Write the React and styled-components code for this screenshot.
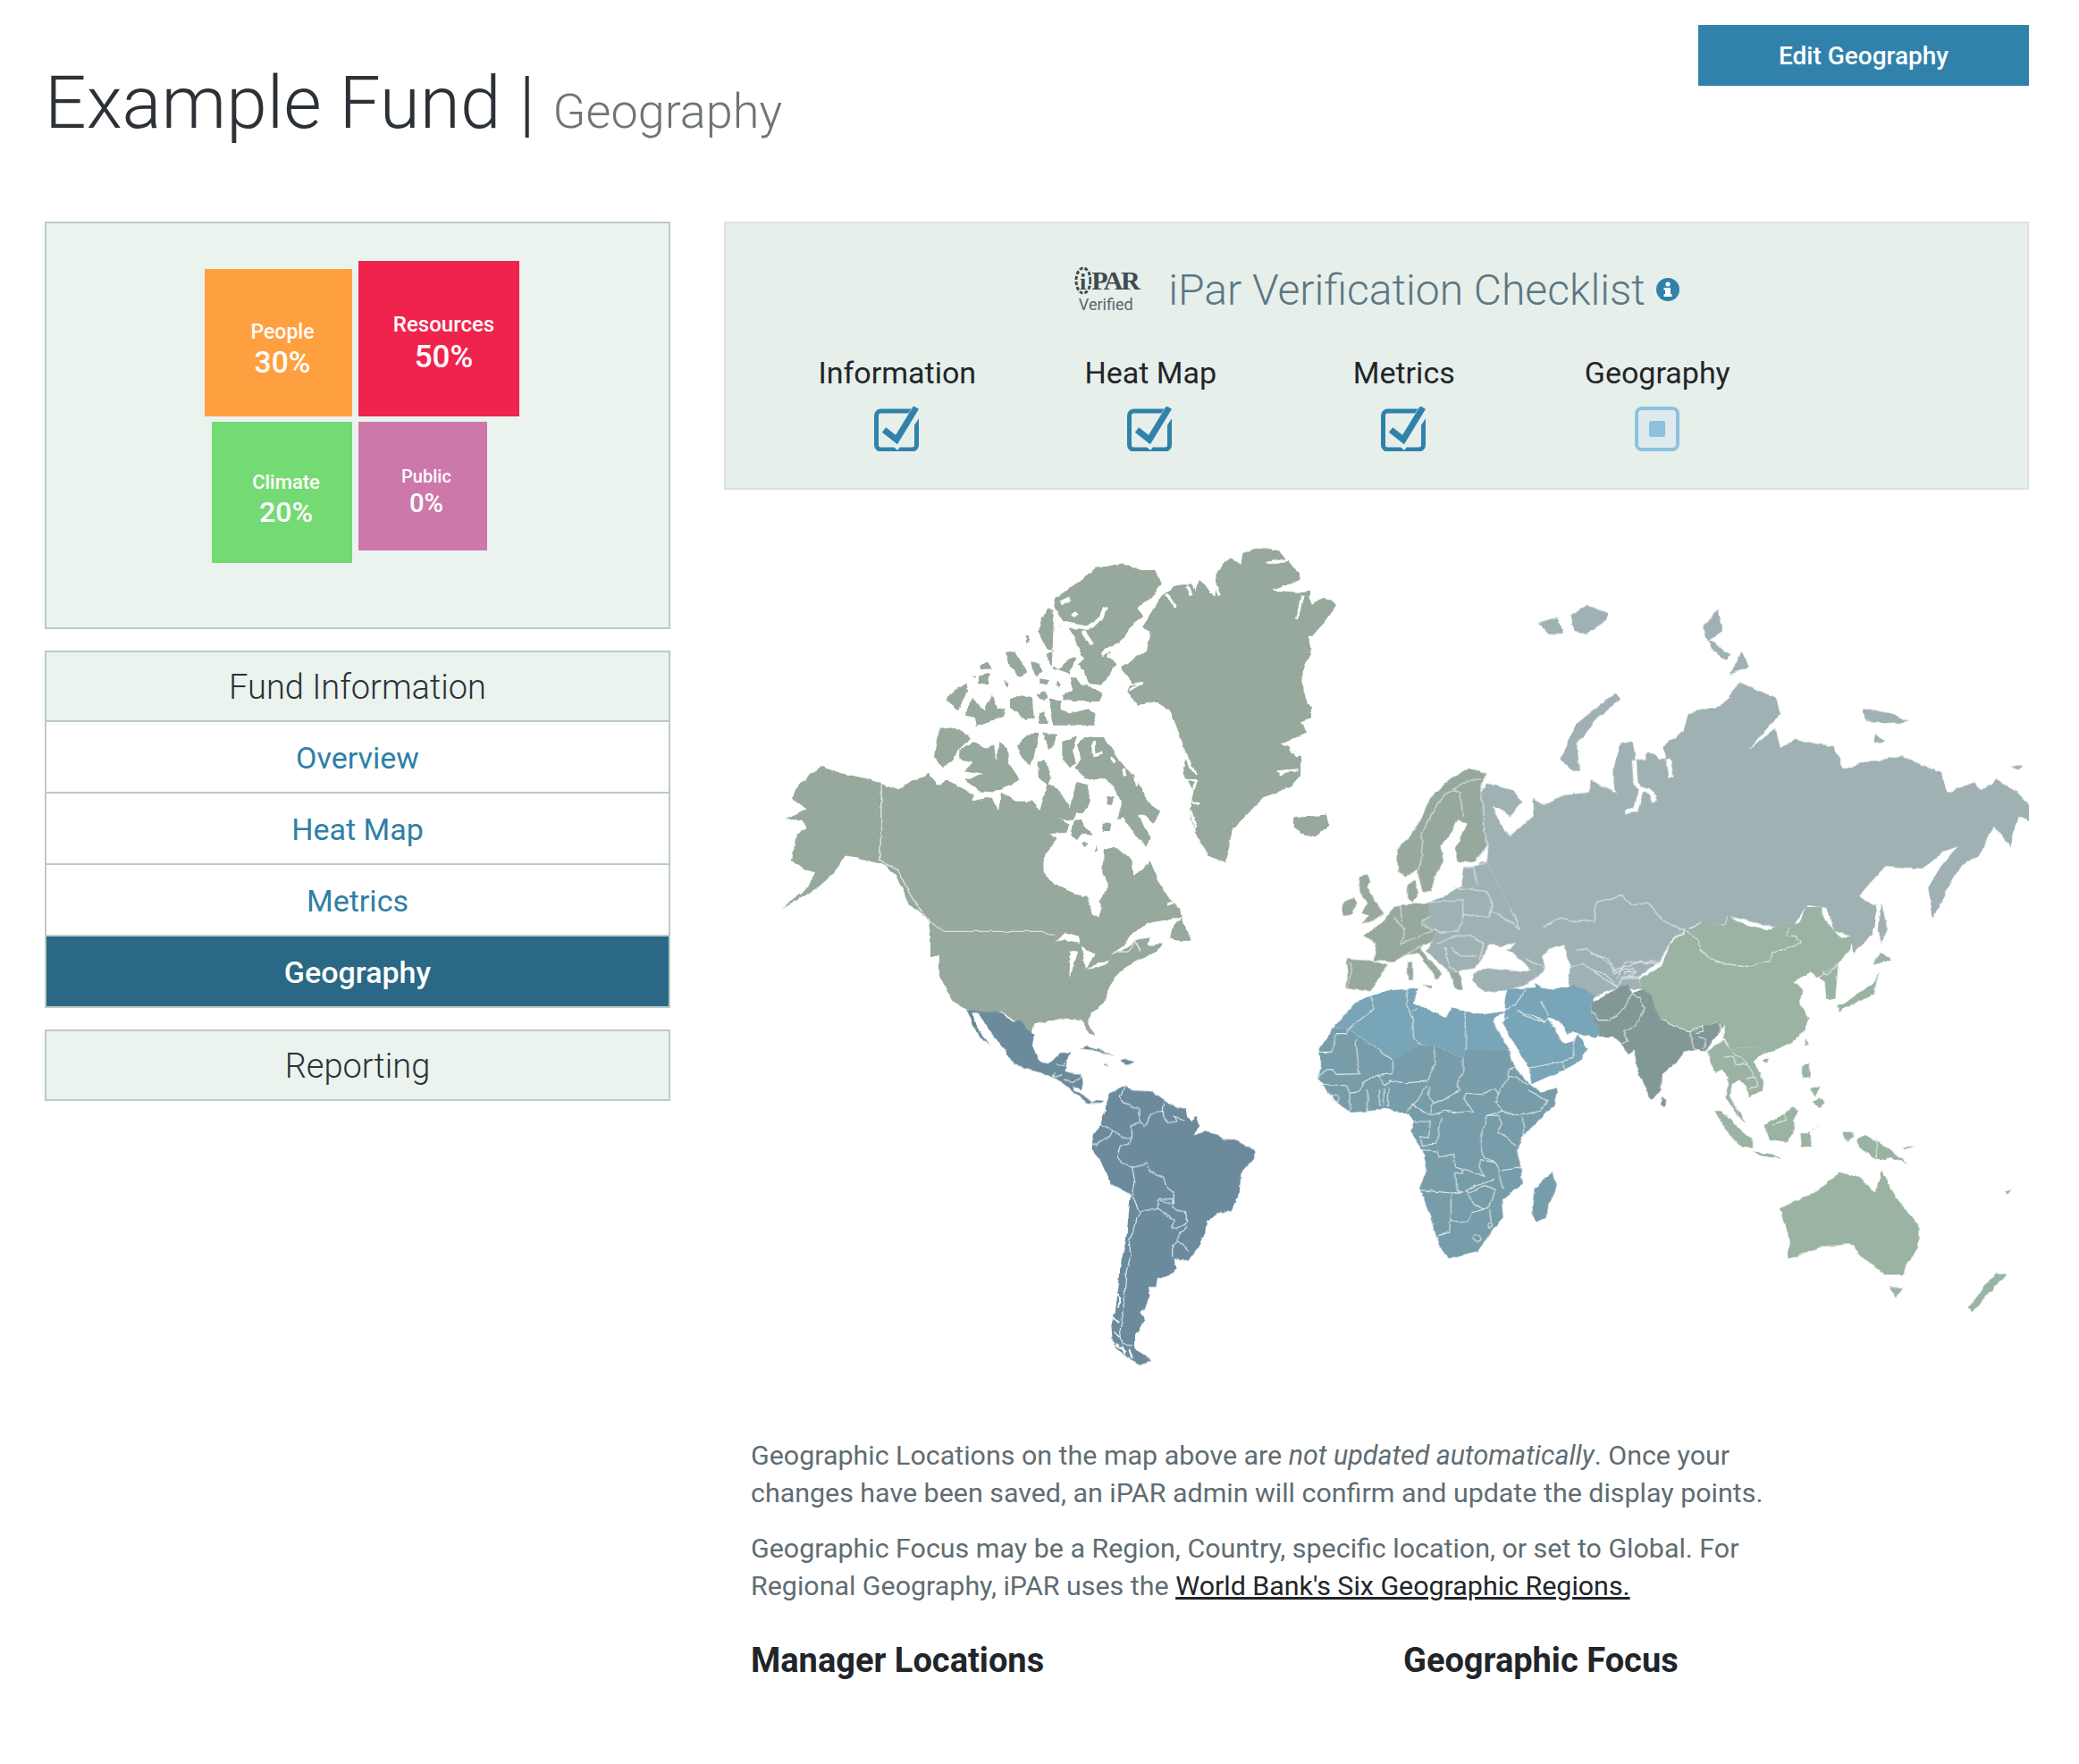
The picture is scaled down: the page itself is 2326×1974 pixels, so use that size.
import styled, { createGlobalStyle } from "styled-components";

const GlobalStyle = createGlobalStyle`
  html, body { margin: 0; padding: 0; background: #fff; }
  body { font-family: Roboto, "Liberation Sans", sans-serif; color: #212529; }
  * { box-sizing: border-box; }
`;

const Page = styled.div`
  width: 2326px;
  padding: 0 56px 0 50px;
`;

const Header = styled.header`
  display: flex;
  justify-content: space-between;
  align-items: flex-start;
  height: 248px;
`;

const Title = styled.h1`
  margin: 62px 0 0 0;
  font-size: 82px;
  line-height: 106px;
  font-weight: 300;
  color: #2b3136;
`;

const SubTitle = styled.small`
  font-size: 54px;
  font-weight: 300;
  color: #6f7477;
`;

const EditButton = styled.button`
  width: 370px;
  height: 68px;
  margin-top: 28px;
  border: 0;
  background: #3082ab;
  color: #fff;
  font: 500 28px Roboto, sans-serif;
`;

const Layout = styled.div`
  display: grid;
  grid-template-columns: 700px 1460px;
  gap: 60px;
  align-items: start;
`;

const Sidebar = styled.aside`
  display: flex;
  flex-direction: column;
  gap: 24px;
`;

const TreePanel = styled.div`
  height: 456px;
  padding: 42px 0 0 175px;
  background: #eaf3ee;
  border: 2px solid #bccbc6;
`;

const TreeGrid = styled.div`
  display: grid;
  grid-template-columns: 167px 180px;
  column-gap: 6.5px;
  row-gap: 6px;
`;

const Tile = styled.div`
  width: ${(p) => p.$w}px;
  height: ${(p) => p.$h}px;
  justify-self: ${(p) => p.$justify};
  align-self: ${(p) => p.$align};
  background: ${(p) => p.$color};
  color: #fff;
  display: flex;
  flex-direction: column;
  align-items: center;
  justify-content: center;
  padding: ${(p) => p.$top}px 0 0 ${(p) => p.$left}px;
  font-size: ${(p) => p.$size}px;
  line-height: 1.2;
  font-weight: 500;
  span {
    font-size: ${(p) => p.$size * 1.46}px;
    line-height: 1.25;
  }
`;

const NavBox = styled.nav`
  border: 2px solid #bccbc6;
  display: flex;
  flex-direction: column;
`;

const NavHead = styled.div`
  height: 76px;
  padding-top: 2px;
  background: #eaf3ee;
  font-size: 38px;
  font-weight: 300;
  color: #2b3136;
  display: flex;
  align-items: center;
  justify-content: center;
`;

const NavLink = styled.a`
  height: 80px;
  padding-top: 2px;
  border-top: 2px solid #bccbc6;
  background: ${(p) => (p.$active ? "#2a6885" : "#fff")};
  color: ${(p) => (p.$active ? "#fff" : "#2f7fa6")};
  font-size: 34px;
  font-weight: ${(p) => (p.$active ? 500 : 400)};
  display: flex;
  align-items: center;
  justify-content: center;
`;

const Main = styled.main`
  display: flex;
  flex-direction: column;
`;

const CheckPanel = styled.section`
  height: 300px;
  background: #e6efea;
  border: 2px solid #dde1df;
  padding: 34px 0 0 50px;
`;

const CheckTitleRow = styled.div`
  display: flex;
  align-items: center;
  justify-content: center;
  gap: 34px;
  height: 80px;
  margin-left: -50px;
`;

const Logo = styled.div`
  width: 72px;
  display: flex;
  flex-direction: column;
  align-items: center;
  color: #3f4a50;
`;

const LogoMark = styled.div`
  display: flex;
  align-items: center;
  font: 700 30px/34px "Liberation Serif", serif;
  letter-spacing: -2.5px;
`;

const LogoVerified = styled.div`
  font-size: 18px;
  line-height: 20px;
  color: #5a666c;
`;

const CheckTitle = styled.h2`
  margin: 0;
  font-size: 48px;
  font-weight: 300;
  color: #5d7683;
  display: flex;
  align-items: center;
  gap: 12px;
`;

const CheckRow = styled.div`
  display: grid;
  grid-template-columns: repeat(4, 283.5px);
  margin-top: 31px;
`;

const CheckItem = styled.div`
  display: flex;
  flex-direction: column;
  align-items: center;
  gap: 16px;
  font-size: 34px;
  line-height: 44px;
  color: #212529;
`;

const MapSvg = styled.svg`
  display: block;
  width: 1460px;
  height: 1030px;
  path { vector-effect: non-scaling-stroke; fill: none; }
`;

const Copy = styled.div`
  padding: 30px 0 0 30px;
  width: 1180px;
`;

const Para = styled.p`
  margin: 0 0 20px;
  font-size: 30.4px;
  line-height: 42px;
  color: #5f6c73;
  a { color: #212529; text-decoration: underline; }
`;

const Columns = styled.div`
  display: grid;
  grid-template-columns: 730px 1fr;
  margin-top: 20px;
  padding-left: 30px;
`;

const ColHeading = styled.h3`
  margin: 0;
  font-size: 38px;
  line-height: 44px;
  font-weight: 700;
  color: #212529;
`;

function CheckedBox() {
  return (
    <svg width="52" height="50" viewBox="0 0 52 50">
      <rect x="2.5" y="5" width="45" height="43" rx="5" fill="none" stroke="#3082ab" strokeWidth="5" />
      <path d="M11 26 L25 39 L49 3" fill="none" stroke="#e6efea" strokeWidth="13" />
      <path d="M11 26 L25 37 L47 1" fill="none" stroke="#3082ab" strokeWidth="7" />
    </svg>
  );
}

function PartialBox() {
  return (
    <svg width="52" height="50" viewBox="0 0 52 50">
      <rect x="3" y="2" width="46" height="46" rx="6" fill="#dfeaec" stroke="#8dc2de" strokeWidth="4" />
      <rect x="17" y="16" width="18" height="18" rx="2" fill="#8dc2de" />
    </svg>
  );
}

function InfoIcon() {
  return (
    <svg width="26" height="26" viewBox="0 0 26 26">
      <circle cx="13" cy="13" r="13" fill="#3082ab" />
      <rect x="10" y="11" width="6" height="9" fill="#fff" />
      <rect x="8.5" y="18" width="9" height="3" fill="#fff" />
      <rect x="8.5" y="11" width="6" height="2.5" fill="#fff" />
      <circle cx="13" cy="7" r="2.6" fill="#fff" />
    </svg>
  );
}

function LogoRing() {
  return (
    <svg width="20" height="34" viewBox="0 0 20 34">
      <ellipse cx="11" cy="17" rx="8" ry="14" fill="none" stroke="#3f4a50" strokeWidth="3" strokeDasharray="4 2" />
      <text x="7" y="27" fontFamily="Liberation Serif" fontWeight="700" fontSize="26" fill="#3f4a50">i</text>
    </svg>
  );
}

const C = {
  west: "#97a89c",
  russia: "#a0b1b4",
  east: "#9ab3a2",
  latam: "#6b8b9d",
  mena: "#78a5b7",
  africa: "#789daa",
  south: "#829896",
};

// every list below is traced in the pixels of one crop of the reference,
// its group in WorldMap carries that crop's offset and scale
const NORTH = [
  "1130,75 1180,58 1215,70 1235,100 1262,130 1262,155 1200,185 1260,190 1285,185 1290,225 1320,205 1350,228 1320,280 1305,300 1285,330 1290,370 1270,420 1270,480 1290,530 1290,560 1265,570 1280,600 1225,630 1265,670 1265,725 1240,760 1180,790 1130,850 1105,890 1090,980 1050,960 1020,900 1005,830 1015,770 990,720 1000,670 980,600 960,535 925,510 885,520 860,480 870,450 845,410 905,360 915,310 895,290 940,200 975,170 1010,165 1020,190 1030,155 1065,205 1070,130 1100,90 1125,110",
  "125,715 150,698 185,718 250,735 280,748 325,770 345,745 385,730 395,720 415,750 450,760 480,790 600,850 660,950 665,1010 690,1045 740,1075 770,1085 775,1130 800,1150 860,1120 985,1130 960,1140 905,1160 870,1190 850,1225 820,1250 845,1240 885,1205 915,1200 905,1225 945,1215 930,1240 880,1270 860,1285 835,1310 815,1350 810,1385 775,1420 770,1450 785,1490 770,1480 755,1440 700,1435 640,1455 635,1480 600,1445 565,1415 520,1420 480,1405 450,1385 420,1310 420,1240 430,1205 395,1150 350,1100 320,1020 290,985 250,975 225,965 200,960 175,1010 130,1060 50,1115 110,1060 130,1010 100,1000 75,975 85,900 110,880 100,855 60,855 110,825 75,790 95,750",
  "985,1140 1010,1205 985,1212 960,1200 965,1170",
  "1250,850 1290,845 1325,840 1332,870 1300,905 1265,895 1250,875",
].map((p) => ({ c: C.west, p }));

const NORTH_LINES = [
  { d: "M1000 170 L1010 200 M950 195 L975 235 M1060 150 L1075 200 M1185 105 L1235 95 M1270 200 L1255 270 M1225 630 L1255 620 L1240 650 L1260 670 M1210 715 L1260 710 M1285 320 L1300 335", w: 3, c: "#fff" },
  { d: "M285 750 L282 975 L322 1000 L350 1070 L375 1120 L400 1155 L432 1182 L660 1182 L690 1195 M830 1240 L860 1242 L880 1210 L890 1240", w: 1.2, c: "#d5dfd9" },
];

const LAKES = [
  "690,1215 715,1185 745,1195 750,1218 715,1205",
  "725,1240 745,1240 735,1280 722,1315",
  "755,1225 785,1250 770,1275 760,1290",
  "760,1290 795,1275 820,1262 800,1285",
];

const ARCTIC = [
  "420,0 499,-56 556,-102 650,-119 707,-96 757,-96 776,-50 745,0 695,30 720,60 670,100 640,150 600,165 610,190 625,220 600,260 575,290 535,285 520,240 500,220 520,200 490,175 470,120 440,90 415,40 395,35 375,70 365,110 385,150 395,170 420,175 390,190 410,230 435,240 470,200 490,200 470,255 445,245 410,235",
  "255,180 285,175 310,215 325,250 305,265 270,225",
  "340,210 365,215 380,245 365,260 345,240",
  "322,125 332,125 335,145 325,148",
  "165,225 195,212 210,235 170,238",
  "165,260 200,250 195,285 165,285",
  "145,255 155,268 148,268",
  "250,270 262,290 262,300 252,290",
  "370,265 400,270 395,285 370,285",
  "425,275 440,285 435,298 425,290",
  "55,345 90,300 125,285 130,310 95,375 75,355",
  "125,370 145,335 185,375 210,320 225,370 250,365 250,395 200,415 155,430 150,400 120,390",
  "270,340 310,325 345,335 350,400 320,405 270,365",
  "360,320 385,310 400,335 385,345 362,330",
  "365,385 385,380 397,420 370,420",
  "405,335 440,340 440,375 470,385 530,370 560,385 555,425 415,425 405,380",
  "445,325 480,305 470,265 490,265 510,290 530,290 580,320 570,345 490,345 445,340",
  "30,435 70,430 110,445 135,470 100,505 75,540 45,565 15,530",
  "100,510 145,480 190,505 215,490 225,545 235,480 260,500 265,550 305,610 285,620 245,635 210,650 170,650 120,605 180,590 115,580 145,550 100,540",
  "290,495 330,455 370,450 355,520 335,560 310,530",
  "380,450 430,455 415,495 395,505",
  "365,550 385,540 410,600 400,625 365,600",
  "445,480 495,460 480,510 495,555 470,570 445,540",
  "495,490 520,465 585,465 610,500 640,545 680,590 710,630 740,690 775,715 750,755 720,725 700,725 740,800 730,830 690,795 650,730 630,740 645,690 625,640 590,600 560,610 520,600 490,570 510,540",
  "0,625 30,625 60,610 120,640 150,660 140,680 210,665 230,720 240,650 290,680 345,680 370,710 385,660 395,620 430,635 470,700 490,640 495,615 530,625 540,680 515,720 490,715 480,745 430,735 470,755 460,785 400,790 430,805 385,860 380,915 410,955 500,995 530,1000 545,1060 565,1080 578,1035 570,1010 600,970 580,920 585,840 620,830 680,880 685,930 730,890 740,880 770,950 800,1000 840,1040 845,1065 820,1075 720,1090 640,1140 580,1190 0,1200",
  "485,745 505,740 550,795 510,790 495,810 475,795",
  "510,820 535,820 520,835",
  "555,830 565,845 555,850",
  "595,662 618,668 612,692 592,690",
  "580,755 610,755 605,780 585,780",
].map((p) => ({ c: C.west, p }));

const ARCTIC_LINES = [
  { d: "M415 40 L450 90 L480 130 L500 190 M450 85 L530 100 L575 65 L590 30 M515 110 L545 155 M480 60 L495 45 M470 0 L440 15 M600 190 L620 195 M580 190 L610 165", w: 5 },
  { d: "M550 480 L550 520 M550 525 L580 515 M610 530 L625 550 M650 570 L660 595 M690 600 L695 625 M800 1030 L825 1012 M710 730 L745 760", w: 3.5 },
  { d: "M860 520 L880 570 L895 590 M860 610 L900 610 L885 640 M880 680 L905 690 M875 710 L895 770 M660 290 L715 283 L670 310 M1175 590 L1200 575 M1180 485 L1200 490", w: 2.5 },
].map((l) => ({ ...l, c: "#fff" }));

const LATIN = [
  "240,145 265,150 300,158 345,155 365,160 400,190 425,185 470,235 465,270 490,325 520,330 555,295 595,292 580,330 575,360 630,365 635,395 630,420 600,405 610,425 640,440 665,460 690,450 705,455 700,462 650,462 600,425 560,390 530,375 490,360 430,345 380,310 375,285 320,220 285,160 262,160 290,225 325,270 300,250 265,205",
  "725,430 775,405 800,420 870,425 905,450 950,480 980,485 985,510 1000,525 1015,503 1030,540 1005,570 1045,560 1090,570 1100,585 1145,585 1210,620 1210,650 1165,700 1160,770 1135,825 1095,830 1050,860 1045,900 1020,945 990,985 960,990 940,985 950,1020 920,1045 885,1050 880,1080 855,1080 860,1105 845,1150 825,1165 845,1190 810,1240 810,1290 865,1328 825,1340 770,1310 735,1265 730,1210 740,1170 750,1090 760,1010 780,920 795,770 730,735 695,660 665,620 668,570 695,530 710,490 712,460",
  "625,280 650,270 690,285 745,310 715,300 670,285",
  "760,320 780,313 812,328 775,332",
  "700,332 720,335 705,337",
].map((p) => ({ c: C.latam, p }));

const LATIN_LINES = "M775 410 L760 440 L770 465 L825 480 L825 525 L845 540 L860 505 L900 490 L905 460 M900 490 L920 530 L950 525 L940 505 L975 520 M825 530 L798 540 L800 575 L790 600 L760 610 L750 640 L765 665 L800 680 L850 667 L855 690 L905 712 L915 745 L940 765 L940 800 L890 790 L885 815 M693 535 L730 550 L765 575 L795 580 M735 555 L725 575 L695 590 L680 605 L665 600 M800 680 L808 720 L800 770 L825 830 L860 820 L885 815 L945 860 L935 880 L950 885 L985 860 L975 830 L940 815 L935 785 L890 785 M828 830 L815 850 L810 880 L790 925 L795 975 L780 1030 L775 1100 L775 1140 L760 1220 L765 1270 L805 1275 M990 960 L950 925 L935 945 L935 980 M985 870 L950 920 M545 335 L570 340 L575 330 M540 360 L535 375 L565 365 M570 385 L600 395 L635 372";

const LATIN_FJORDS = "M745 1100 L760 1120 L750 1150 M735 1180 L755 1200 M740 1230 L760 1250 M745 1270 L780 1300 M790 1290 L800 1320 M770 1280 L775 1310";

const SIBERIA = [
  { c: C.russia, p: "740,485 710,455 775,435 755,375 800,345 810,310 880,295 915,250 990,280 1000,310 935,380 990,340 1000,380 1030,360 1075,370 1110,375 1130,420 1175,405 1250,395 1330,425 1345,465 1400,445 1415,460 1445,440 1490,465 1513,490 1513,520 1490,510 1475,570 1440,530 1410,590 1375,605 1345,650 1315,710 1305,650 1330,610 1365,570 1335,580 1295,615 1215,610 1160,668 1200,685 1190,740 1150,780 1145,745 1110,735 1095,690 1055,685 1020,735 890,705 885,725 835,718 800,735 740,700" },
  { c: C.russia, p: "660,465 655,420 670,370 695,365 705,430 700,495" },
  { c: C.russia, p: "710,455 725,385 745,395 775,435" },
  { c: C.russia, p: "500,135 540,125 550,155 520,155" },
  { c: C.russia, p: "565,120 600,100 645,115 640,130 600,155 575,150" },
  { c: C.russia, p: "545,400 580,330 660,270 668,285 620,320 580,370 585,420 570,425" },
  { c: C.russia, p: "840,140 870,110 880,150 850,170" },
  { c: C.russia, p: "850,165 895,195 890,205 860,190" },
  { c: C.russia, p: "895,235 920,190 935,220" },
  { c: C.russia, p: "1170,300 1225,310 1265,325 1240,330 1175,325" },
  { c: C.russia, p: "1195,350 1215,365 1195,368" },
  { c: C.russia, p: "1475,415 1500,410 1490,420" },
  { c: C.east, p: "1000,1275 1080,1240 1120,1205 1165,1215 1195,1245 1210,1200 1235,1250 1285,1310 1285,1350 1250,1405 1215,1405 1175,1375 1145,1345 1085,1350 1015,1375 1020,1340" },
  { c: C.east, p: "1225,1430 1250,1430 1240,1450" },
  { c: C.east, p: "1445,1400 1468,1405 1430,1440 1395,1480 1387,1470 1420,1430" },
];

const EUROPE = [
  { c: C.russia, p: "495,120 520,80 600,100 640,140 600,190 540,155 580,240 600,255 640,220 680,190 675,125 710,155 780,120 860,110 870,70 960,115 950,30 1010,0 1200,0 1200,580 1110,540 1060,480 1010,490 970,455 885,480 880,540 820,545 770,530 710,560 715,610 730,640 705,660 720,700 650,670 590,640 615,610 570,630 630,570 600,500 520,340 525,285 510,240 505,150" },
  { c: C.russia, p: "710,560 770,530 820,545 880,540 885,480 970,455 1010,490 1060,480 1110,540 1185,575 1140,610 1100,680 1030,730 1045,770 990,770 950,770 880,795 800,760 790,740 800,690 780,620 710,640" },
  { c: C.russia, p: "325,480 375,460 440,420 440,365 490,355 500,340 520,340 600,500 630,570 620,605 570,630 530,620 490,690 480,700 420,710 395,715 355,680 315,640 340,610 350,570 300,545 330,530" },
  { c: C.russia, p: "475,715 520,700 600,710 670,710 690,730 640,760 580,775 510,780 475,745" },
  { c: C.russia, p: "600,640 650,670 720,700 690,730 660,700" },
  { c: C.west, p: "220,300 265,255 300,200 330,130 390,70 460,30 520,45 500,85 505,150 510,240 525,285 480,340 425,345 415,300 455,215 425,200 405,240 365,295 375,340 345,395 335,440 305,445 285,365 250,395 222,375" },
  { c: C.west, p: "255,420 280,405 290,450 270,480 255,460" },
  { c: C.west, p: "95,395 120,385 130,410 115,425 130,450 175,515 140,540 100,555 125,525 100,515 120,480 90,440" },
  { c: C.west, p: "40,480 75,460 85,480 70,520 35,525" },
  { c: C.west, p: "105,590 180,540 205,495 235,490 325,480 330,530 300,545 350,570 340,610 300,625 300,640 335,680 370,720 350,740 320,690 290,650 240,660 205,680 140,675 150,620" },
  { c: C.west, p: "50,670 130,675 190,690 160,730 130,775 85,770 45,765 55,710" },
  { c: C.west, p: "255,680 270,680 270,740 255,740" },
  { c: C.west, p: "305,755 340,760 335,770" },
  { c: C.west, p: "395,715 425,710 440,770 415,770" },
];

const EUROPE_LINES = "M405 95 L430 110 L440 190 M415 100 L380 115 L345 165 L300 250 L305 320 L290 370 M500 65 L460 70 L410 95 M205 530 L245 570 L230 620 L280 600 L350 570 M230 490 L235 545 M300 545 L330 530 M330 480 L440 470 L440 545 L420 580 M440 520 L530 530 L530 510 L555 515 L630 570 M410 430 L470 435 L490 440 L520 440 L540 490 L530 520 M440 365 L480 360 L485 420 M300 550 L360 580 L420 575 M420 590 L470 590 L510 620 L495 670 M350 620 L420 590 M240 660 L300 625 M400 630 L430 660 L490 660 M380 630 L395 700 L420 710 M60 680 L70 700 L50 770 M820 640 L855 635 L940 690 L945 720 L970 710 L985 680 L1100 680 M800 700 L845 685 L900 725 L960 765 L975 730 L1035 730 M980 720 L1010 700 L1020 720 M650 670 L720 700 M520 340 L525 285 M500 85 L505 150 L510 240 L525 285 L480 345 M600 500 L630 570 M710 560 L770 530 L820 545 L880 540 L885 480 L970 455 L1010 490 L1060 480 L1110 540 L1185 575 M520 340 L490 355 M1100 680 L1140 610 L1185 575";

const ASIA = [
  { c: C.east, p: "165,285 240,240 265,170 320,125 380,92 450,110 460,70 500,100 590,120 650,105 700,100 720,45 770,45 800,110 840,150 885,140 870,185 840,225 800,255 760,280 735,265 680,295 710,320 700,370 730,420 715,460 680,495 630,520 590,535 550,510 500,520 470,525 445,480 450,445 425,430 340,465 280,450 240,425 215,385 205,345 170,320" },
  { c: C.east, p: "765,280 830,235 820,350 790,355 785,300" },
  { c: C.east, p: "825,375 850,370 910,325 950,300 965,260 950,340 890,365 845,385 835,400" },
  { c: C.east, p: "950,235 970,195 1005,220 975,235" },
  { c: C.russia, p: "975,30 995,120 975,170 965,120" },
  { c: C.east, p: "712,515 725,485 728,505" },
  { c: C.east, p: "390,530 445,490 470,525 500,520 550,510 590,535 545,560 580,630 575,660 530,685 525,650 500,625 470,640 465,680 510,755 480,720 455,690 460,620 440,590 420,600 400,560" },
  { c: C.east, p: "578,560 598,550 590,570" },
  { c: C.east, p: "480,720 510,755 520,770 490,750" },
  { c: C.east, p: "415,730 440,730 490,780 540,825 540,855 500,845 450,790" },
  { c: C.east, p: "540,865 610,875 640,890 570,880" },
  { c: C.east, p: "580,775 650,740 675,715 695,730 680,760 690,785 660,835 600,825" },
  { c: C.east, p: "700,805 725,805 770,775 735,800 745,850 705,850" },
  { c: C.east, p: "712,575 735,570 735,620 710,615" },
  { c: C.east, p: "765,685 785,700 770,720 740,700" },
  { c: C.east, p: "735,650 770,650 750,680" },
  { c: C.east, p: "845,800 875,800 880,815 860,835" },
  { c: C.east, p: "890,825 920,810 1000,855 1065,910 1010,885 985,895 940,885 905,850" },
  { c: C.east, p: "1045,855 1090,845 1060,860" },
  { c: C.east, p: "1390,1000 1415,990 1400,1008" },
  { c: C.south, p: "5,365 30,350 95,315 125,305 135,335 175,320 205,345 215,385 240,425 330,465 345,460 430,430 445,445 405,500 385,530 355,520 315,530 285,570 240,605 235,660 205,695 175,640 150,580 150,525 125,540 100,500 75,480 25,480 30,460 5,420" },
  { c: C.south, p: "238,680 255,705 245,718 233,705" },
];

const ASIA_LINES = "M320 125 L360 150 L365 190 L425 230 L525 248 L600 225 L610 200 L660 180 L705 165 L685 145 L655 145 L665 110 M5 395 L25 425 L60 425 L110 390 L135 335 M135 335 L165 350 L180 385 L150 440 L110 460 L125 495 L105 500 M240 425 L300 450 L330 465 L345 520 M330 465 L345 450 L375 445 L380 465 L350 470 M380 520 L385 490 L360 480 M445 550 L480 545 L490 575 L525 570 M520 620 L555 620 L560 645 L535 660 M475 530 L525 570 L550 620 M0 200 L60 220 L80 260 L110 245 L165 230 L240 240 M0 255 L50 270 L90 315 M85 285 L100 255 L140 250 M165 285 L100 285 M110 260 L150 265 L120 280 M430 435 L445 490 M958 822 L958 895 M650 740 L655 760 L610 775 M780 260 L790 275 L830 240 M445 490 L390 530";

const AFRICA = [
  { c: C.mena, p: "130,110 165,70 220,45 280,25 345,20 380,15 365,65 395,80 475,115 490,85 540,95 600,105 670,95 630,125 685,225 540,225 530,250 430,208 385,205 300,260 145,155 95,150" },
  { c: C.africa, p: "45,232 95,150 145,155 295,260 385,205 430,208 530,250 540,225 685,225 705,285 760,345 790,365 850,352 835,410 780,465 730,515 712,560 725,620 728,675 660,730 665,785 630,830 580,900 480,925 460,900 440,845 415,770 385,690 410,625 395,560 355,500 365,465 345,435 315,435 280,420 215,430 155,435 100,395 45,320 55,270" },
  { c: C.africa, p: "770,690 830,635 842,680 805,790 780,800 760,770" },
  { c: C.mena, p: "670,60 680,20 775,15 770,0 820,25 850,20 900,5 970,40 965,90 985,150 995,165 975,185 925,170 905,165 880,170 850,125 815,115 805,125 720,95 665,130" },
  { c: C.mena, p: "660,130 720,95 805,130 815,120 850,175 865,205 905,195 915,170 950,220 925,260 870,290 760,340 752,285 700,200" },
];

const AFRICA_LINES = "M45 232 L90 232 L105 170 L142 170 L142 155 M170 185 L182 305 L105 307 L95 290 L65 292 L45 320 M295 260 L295 305 L245 310 L200 330 L180 365 L150 370 L140 345 L60 340 M245 310 L270 345 L285 330 L340 335 L410 330 L435 275 L430 215 M530 250 L530 300 L510 340 L520 360 L460 395 L430 400 L415 375 L420 345 M430 400 L420 445 L470 430 L510 435 L565 430 L530 385 L540 370 L600 375 L635 350 L650 370 L640 400 L665 430 L720 445 L790 430 L815 395 L750 360 M680 320 L700 315 L750 340 M650 370 L680 320 L685 290 L705 280 M665 430 L610 445 L595 500 L590 550 L605 585 L640 605 L650 630 L655 660 L665 690 M610 445 L650 445 L660 475 L645 500 L710 545 M730 450 L735 510 M660 630 L725 620 M395 560 L445 565 L450 585 L500 575 L505 620 L530 625 L580 640 L600 650 L585 620 L590 590 L640 605 M505 640 L530 640 L530 625 M505 640 L510 695 L525 705 L575 680 L635 660 M385 695 L490 705 L490 770 L485 835 L445 845 M490 705 L545 700 L570 745 L600 760 L620 750 L640 690 L600 680 L550 705 M600 760 L560 770 L545 800 L515 805 L490 795 M620 760 L625 810 M360 465 L420 465 L415 520 L385 515 L395 545 L440 540 L460 450 M150 370 L150 430 M210 360 L210 430 M250 360 L250 415 M265 355 L265 415 M280 350 L280 415 M345 430 L410 345 M420 445 L360 410 M90 387 a12 12 0 1 0 24 0 a12 12 0 1 0 -24 0 M566 857 a13 10 0 1 0 26 0 a13 10 0 1 0 -26 0 M612 815 a8 8 0 1 0 16 0 a8 8 0 1 0 -16 0 M225 45 L228 90 L145 155 M345 20 L340 70 L360 120 L365 185 L385 205 M360 95 L380 85 M540 95 L542 225 M660 130 L680 110 M670 90 L705 75 L740 20 M710 90 L770 125 L805 130 M790 60 L815 110 M752 285 L860 265 L875 290 M860 265 L900 250 L905 195";

const Land = ({ list }) =>
  list.map((item, i) => <polygon key={i} points={item.p} fill={item.c} />);

const Lines = ({ list }) =>
  list.map((l, i) => <path key={i} d={l.d} stroke={l.c} strokeWidth={l.w} strokeLinejoin="round" />);

function WorldMap() {
  return (
    <MapSvg viewBox="810 548 1460 1030">
      <defs>
        <filter id="coast" filterUnits="userSpaceOnUse" x="810" y="548" width="1460" height="1030" colorInterpolationFilters="sRGB">
          <feTurbulence type="fractalNoise" baseFrequency="0.09" numOctaves="3" seed="4" />
          <feDisplacementMap in="SourceGraphic" scale="4.5" xChannelSelector="R" yChannelSelector="G" />
        </filter>
      </defs>
      <g filter="url(#coast)">
        <g transform="translate(850 590) scale(0.4783 0.3827)">
          <Land list={NORTH} />
          <Lines list={NORTH_LINES} />
        </g>
        <g transform="translate(1040 670) scale(0.3333)">
          <Land list={ARCTIC} />
          <Lines list={ARCTIC_LINES} />
        </g>
        <g transform="translate(850 590) scale(0.4783 0.3827)">
          {LAKES.map((p, i) => (
            <polygon key={i} points={p} fill="#fff" />
          ))}
          <Lines list={[NORTH_LINES[1]]} />
        </g>
        <g transform="translate(1000 1080) scale(0.3333)">
          <Land list={LATIN} />
          <path d={LATIN_LINES} stroke="#dfe8ea" strokeWidth="1.2" />
          <path d={LATIN_FJORDS} stroke="#fff" strokeWidth="2" />
        </g>
        <g transform="translate(1450 620) scale(0.542 0.574)">
          <Land list={SIBERIA} />
        </g>
        <g transform="translate(1490 850) scale(0.3333)">
          <Land list={EUROPE} />
          <path d={EUROPE_LINES} stroke="#dfe8ea" strokeWidth="1.1" />
          <polygon points="720,640 780,620 790,665 800,700 790,770 740,755 760,690" fill="#fff" />
          <path d="M1015 0 L1020 80 L1040 100 L1020 170 L985 175 M1040 100 L1075 110 L1085 145 M1130 0 L1140 60" stroke="#fff" strokeWidth="5" />
        </g>
        <g transform="translate(1460 1100) scale(0.3333)">
          <Land list={AFRICA} />
          <path d={AFRICA_LINES} stroke="#dfe8ea" strokeWidth="1.1" />
        </g>
        <g transform="translate(1780 1000) scale(0.3333)">
          <Land list={ASIA} />
          <path d={ASIA_LINES} stroke="#dfe8ea" strokeWidth="1.1" />
        </g>
      </g>
    </MapSvg>
  );
}

const TILES = [
  { label: "People", value: "30%", w: 165, h: 165, justify: "end", align: "end", color: "#ffa040", size: 23, left: 9, top: 18 },
  { label: "Resources", value: "50%", w: 180, h: 174, justify: "start", align: "end", color: "#f0234d", size: 24, left: 12, top: 12 },
  { label: "Climate", value: "20%", w: 157, h: 158, justify: "end", align: "start", color: "#74da74", size: 22, left: 9, top: 18 },
  { label: "Public", value: "0%", w: 144, h: 144, justify: "start", align: "start", color: "#cd78aa", size: 20, left: 9, top: 14 },
];

const CHECKS = [
  { label: "Information", done: true },
  { label: "Heat Map", done: true },
  { label: "Metrics", done: true },
  { label: "Geography", done: false },
];

export default function App() {
  return (
    <Page>
      <GlobalStyle />
      <Header>
        <Title>
          Example Fund | <SubTitle>Geography</SubTitle>
        </Title>
        <EditButton>Edit Geography</EditButton>
      </Header>
      <Layout>
        <Sidebar>
          <TreePanel>
            <TreeGrid>
              {TILES.map((t) => (
                <Tile key={t.label} $w={t.w} $h={t.h} $justify={t.justify} $align={t.align} $color={t.color} $size={t.size} $left={t.left} $top={t.top}>
                  {t.label}
                  <span>{t.value}</span>
                </Tile>
              ))}
            </TreeGrid>
          </TreePanel>
          <NavBox>
            <NavHead>Fund Information</NavHead>
            <NavLink>Overview</NavLink>
            <NavLink>Heat Map</NavLink>
            <NavLink>Metrics</NavLink>
            <NavLink $active>Geography</NavLink>
          </NavBox>
          <NavBox>
            <NavHead>Reporting</NavHead>
          </NavBox>
        </Sidebar>
        <Main>
          <CheckPanel>
            <CheckTitleRow>
              <Logo>
                <LogoMark>
                  <LogoRing />
                  PAR
                </LogoMark>
                <LogoVerified>Verified</LogoVerified>
              </Logo>
              <CheckTitle>
                iPar Verification Checklist
                <InfoIcon />
              </CheckTitle>
            </CheckTitleRow>
            <CheckRow>
              {CHECKS.map((c) => (
                <CheckItem key={c.label}>
                  {c.label}
                  {c.done ? <CheckedBox /> : <PartialBox />}
                </CheckItem>
              ))}
            </CheckRow>
          </CheckPanel>
          <WorldMap />
          <Copy>
            <Para>
              Geographic Locations on the map above are <em>not updated automatically</em>. Once your changes have been saved, an iPAR admin will confirm and update the display points.
            </Para>
            <Para>
              Geographic Focus may be a Region, Country, specific location, or set to Global. For Regional Geography, iPAR uses the <a>World Bank's Six Geographic Regions.</a>
            </Para>
          </Copy>
          <Columns>
            <ColHeading>Manager Locations</ColHeading>
            <ColHeading>Geographic Focus</ColHeading>
          </Columns>
        </Main>
      </Layout>
    </Page>
  );
}
